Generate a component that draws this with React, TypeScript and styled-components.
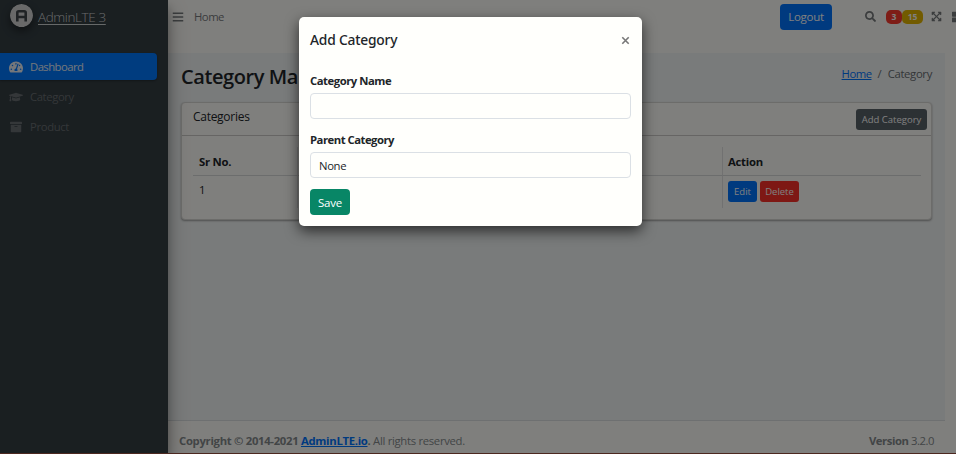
import React from 'react';
import styled, { createGlobalStyle } from 'styled-components';
import { FaSearch, FaBars, FaGraduationCap, FaArchive, FaTachometerAlt, FaExpandArrowsAlt, FaThLarge } from 'react-icons/fa';

const GlobalStyle = createGlobalStyle`
  * { box-sizing: border-box; }
  body { margin: 0; overflow: hidden; font-family: "Open Sans", "Noto Sans", sans-serif; font-size: 11.3px; line-height: 17px; color: #212529; }
  button, input, select { font-family: inherit; }
  h1, h2, p { margin: 0; }
`;

const Page = styled.div`
  position: relative;
  display: flex;
  width: 956px;
  height: 454px;
  overflow: hidden;
  background: #fffefa;
  border-bottom: 1px solid #4c2820;
`;

const Text = styled.span<{ $ls?: number }>`
  letter-spacing: ${p => p.$ls ?? 0}px;
  white-space: nowrap;
`;

const Sidebar = styled.aside`
  z-index: 1;
  flex: none;
  width: 168px;
  background: #343e43;
  box-shadow: 0 10px 20px rgba(0, 0, 0, 0.3), 0 7px 9px rgba(0, 0, 0, 0.24);
`;

const Brand = styled.a`
  display: flex;
  align-items: flex-start;
  height: 53px;
  padding: 4px 0 0 10px;
  color: #cfd2d3;
  font-size: 13.5px;
  font-weight: 300;
`;

const BrandName = styled.span`
  margin: 4px 0 0 5px;
  line-height: 18px;
  letter-spacing: -0.4px;
  white-space: nowrap;
  text-decoration: underline;
  text-underline-offset: 2px;
`;

const Logo = styled.svg`
  width: 23px;
  height: 23px;
  border-radius: 50%;
  box-shadow: 0 4px 8px rgba(0, 0, 0, 0.45);
`;

const NavItem = styled.a<{ $active?: boolean }>`
  display: flex;
  align-items: center;
  width: 157px;
  height: 27px;
  margin-bottom: 3px;
  padding-left: 9px;
  gap: 7px;
  border-radius: 0 4px 4px 0;
  color: ${p => (p.$active ? '#e8eef6' : '#696e72')};
  background: ${p => (p.$active ? '#0078ff' : 'transparent')};
  box-shadow: ${p => (p.$active ? '0 1px 2px rgba(0,0,0,.3)' : 'none')};
  svg { width: 14px; height: ${p => (p.$active ? 14 : 12)}px; }
`;

const Main = styled.div`
  flex: 1;
  display: flex;
  flex-direction: column;
`;

const Topbar = styled.header`
  display: flex;
  flex: none;
  height: 53px;
  padding: 3px 0 0 4px;
  color: #777b7d;
`;

const TopGroup = styled.div<{ $gap: number; $left?: string }>`
  display: flex;
  align-items: center;
  flex: none;
  height: 27px;
  gap: ${p => p.$gap}px;
  margin-left: ${p => p.$left ?? '0'};
`;

const Tools = styled.div`
  display: flex;
  align-items: center;
  height: 27px;
  width: 91px;
  margin-left: 33px;
  overflow: hidden;
  flex: none;
  svg { flex: none; }
`;

const Badge = styled.span<{ $color: string; $text: string; $w: number }>`
  flex: none;
  width: ${p => p.$w}px;
  height: 14px;
  border-radius: 5px;
  background: ${p => p.$color};
  color: ${p => p.$text};
  font-size: 8.5px;
  font-weight: 700;
  line-height: 14px;
  text-align: center;
`;

const Button = styled.button<{ $color: string; $w: number; $h: number; $small?: boolean }>`
  flex: none;
  width: ${p => p.$w}px;
  height: ${p => p.$h}px;
  padding: 0;
  border: 0;
  border-radius: ${p => (p.$small ? 3 : 4)}px;
  background: ${p => p.$color};
  color: #ffffff;
  font-size: ${p => (p.$small ? 9.5 : 11.5)}px;
  letter-spacing: ${p => (p.$small ? 0 : -0.25)}px;
  line-height: ${p => p.$h}px;
  text-align: center;
  white-space: nowrap;
`;

const SaveButton = styled(Button)`
  display: block;
  padding-top: 1px;
`;

const Content = styled.main`
  flex: none;
  width: 777px;
  height: 367px;
  padding: 11px 13px 0 13px;
  background: #f3f6f6;
`;

const TitleRow = styled.div`
  display: flex;
  justify-content: space-between;
  height: 38px;
`;

const Title = styled.h1`
  font-size: 20px;
  font-weight: 600;
  line-height: 25px;
  letter-spacing: -0.42px;
  white-space: nowrap;
`;

const Breadcrumb = styled.nav`
  display: flex;
  gap: 6px;
  padding-top: 1px;
  color: #686e72;
`;

const Link = styled.a`
  color: #0075ff;
  text-decoration: underline;
`;

const Card = styled.section`
  height: 118px;
  border: 1px solid #d8d8d5;
  border-radius: 4px;
  background: #fffefa;
  box-shadow: 0 1px 2px rgba(0, 0, 0, 0.35);
`;

const CardHeader = styled.div`
  display: flex;
  align-items: flex-start;
  justify-content: space-between;
  height: 33px;
  padding: 6px 4px 0 11px;
  border-bottom: 1px solid #cccbc8;
`;

const Heading = styled.h2`
  margin-top: -1px;
  font-size: 12px;
  font-weight: 400;
  line-height: 18px;
  letter-spacing: -0.28px;
`;

const Table = styled.div`
  display: grid;
  grid-template-columns: 105px 425px 198px;
  grid-template-rows: 29px 32px;
  margin: 11px 11px 0 11px;
`;

const Cell = styled.div<{ $head?: boolean; $last?: boolean }>`
  display: flex;
  align-items: ${p => (p.$head ? 'center' : 'flex-start')};
  gap: 3px;
  padding: ${p => (p.$head ? '1px' : '5px')} 0 0 ${p => (p.$last ? 5 : 6)}px;
  border-right: ${p => (p.$last ? 0 : 1)}px solid #e2e3e2;
  border-bottom: ${p => (p.$head ? 1 : 0)}px solid #d8dada;
  font-weight: ${p => (p.$head ? 700 : 400)};
  letter-spacing: -0.25px;
`;

const Footer = styled.footer`
  display: flex;
  flex: none;
  justify-content: space-between;
  width: 777px;
  height: 33px;
  padding: 11px 11px 0 11px;
  border-top: 1px solid #dce0e2;
  color: #858b8d;
`;

const Backdrop = styled.div`
  position: absolute;
  inset: 0;
  z-index: 2;
  background: rgba(0, 0, 0, 0.5);
`;

const Modal = styled.section`
  position: absolute;
  z-index: 3;
  left: 299px;
  top: 17px;
  width: 343px;
  height: 209px;
  padding: 14px 11px 11px;
  border-radius: 5px;
  background: #fffffc;
  box-shadow: 0 5px 14px rgba(0, 0, 0, 0.65);
`;

const ModalHeader = styled.div`
  display: flex;
  justify-content: space-between;
  height: 41px;
`;

const ModalTitle = styled.h2`
  font-family: "Noto Sans", "Open Sans", sans-serif;
  font-size: 13.8px;
  font-weight: 500;
  line-height: 18px;
  letter-spacing: -0.2px;
`;

const CloseIcon = styled.svg`
  width: 9px;
  height: 9px;
  margin: 5px 1px 0 0;
`;

const Field = styled.label`
  display: block;
  height: 59px;
  font-weight: 700;
`;

const Control = styled.div`
  height: 26px;
  margin-top: 4px;
  padding-left: 8px;
  border: 1px solid #dbe0e5;
  border-radius: 4px;
  font-weight: 400;
  line-height: 26px;
`;

const ModalBody = styled.div`
  display: flex;
  flex-direction: column;
  height: 143px;
  ${SaveButton} { margin-top: -1px; }
`;

export default function App() {
  return (
    <Page>
      <GlobalStyle />
      <Sidebar>
        <Brand>
          <Logo viewBox="0 0 23 23">
            <circle cx="11.5" cy="11.5" r="11.5" fill="#d2d2d2" />
            <path d="M7.3 17.5V8.8Q7.3 7.3 8.8 7.3H14.2Q15.7 7.3 15.7 8.8V17.5M7.3 13H15.7" fill="none" stroke="#41474b" strokeWidth="2.6" />
          </Logo>
          <BrandName>AdminLTE 3</BrandName>
        </Brand>
        <NavItem $active><FaTachometerAlt /><Text $ls={-0.55}>Dashboard</Text></NavItem>
        <NavItem><FaGraduationCap /><Text $ls={-0.4}>Category</Text></NavItem>
        <NavItem><FaArchive /><Text $ls={-0.35}>Product</Text></NavItem>
      </Sidebar>
      <Main>
        <Topbar>
          <TopGroup $gap={10}><FaBars size={12} /><Text $ls={-0.5}>Home</Text></TopGroup>
          <TopGroup $gap={0} $left="auto">
            <Button $color="#0075ff" $w={52} $h={26}>Logout</Button>
          </TopGroup>
          <Tools>
            <FaSearch size={11} />
            <TopGroup $gap={0} $left="10px">
              <Badge $color="#fc3b2e" $text="#fff" $w={16}>3</Badge>
              <Badge $color="#e4b600" $text="#fff" $w={21}>15</Badge>
            </TopGroup>
            <TopGroup $gap={10} $left="8px"><FaExpandArrowsAlt size={11} /><FaThLarge size={12} /></TopGroup>
          </Tools>
        </Topbar>
        <Content>
          <TitleRow>
            <Title>Category Management</Title>
            <Breadcrumb><Link><Text $ls={-0.5}>Home</Text></Link><span>/</span><Text $ls={-0.33}>Category</Text></Breadcrumb>
          </TitleRow>
          <Card>
            <CardHeader>
              <Heading>Categories</Heading>
              <Button $small $color="#596268" $w={71} $h={21}>Add Category</Button>
            </CardHeader>
            <Table>
              <Cell $head>Sr No.</Cell>
              <Cell $head />
              <Cell $head $last>Action</Cell>
              <Cell>1</Cell>
              <Cell />
              <Cell $last>
                <Button $small $color="#0075ff" $w={29} $h={21}>Edit</Button>
                <Button $small $color="#fc3028" $w={39} $h={21}>Delete</Button>
              </Cell>
            </Table>
          </Card>
        </Content>
        <Footer>
          <Text $ls={-0.3}><b>Copyright © 2014-2021 <Link>AdminLTE.io</Link>.</b> All rights reserved.</Text>
          <Text $ls={-0.45}><b>Version</b> 3.2.0</Text>
        </Footer>
      </Main>
      <Backdrop />
      <Modal>
        <ModalHeader>
          <ModalTitle>Add Category</ModalTitle>
          <CloseIcon viewBox="0 0 9 9"><path d="M1.3 1.3 7.7 7.7M7.7 1.3 1.3 7.7" stroke="#777" strokeWidth="1.6" /></CloseIcon>
        </ModalHeader>
        <ModalBody>
          <Field><Text $ls={-0.47}>Category Name</Text><Control /></Field>
          <Field><Text $ls={-0.5}>Parent Category</Text><Control><Text $ls={-0.35}>None</Text></Control></Field>
          <SaveButton $color="#088666" $w={40} $h={26}>Save</SaveButton>
        </ModalBody>
      </Modal>
    </Page>
  );
}
